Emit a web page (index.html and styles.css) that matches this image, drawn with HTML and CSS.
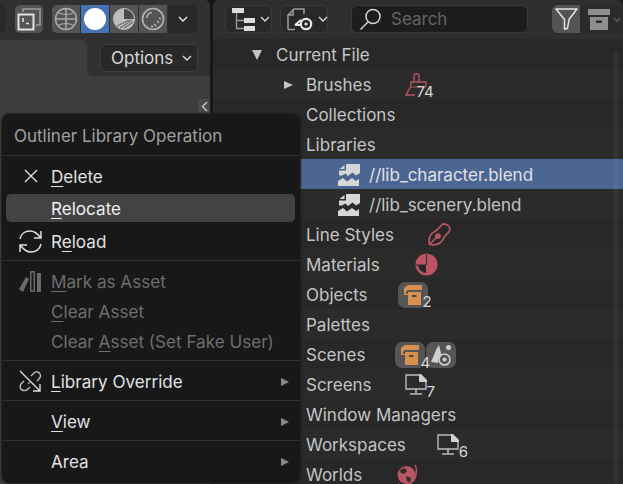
FILE: index.html
```html
<!DOCTYPE html>
<html lang="en">
<head>
  <meta charset="UTF-8">
  <title>Outliner Library Operation</title>
  <link rel="stylesheet" href="styles.css">
</head>
<body>
  <div class="app">

    <!-- 3D viewport, only its corner is visible -->
    <section class="viewport">
      <header class="view-header">
        <div class="stub"></div>
        <div class="xray">
          <svg width="24" height="23" viewBox="0 0 24 23" fill="none">
            <path d="M6 4V1H23V17H19" stroke="#9c9c9c" stroke-width="1.6"/>
            <path d="M1.5 6.5H16.5V21.5H1.5Z" stroke="#e2e2e2" stroke-width="2"/>
            <path d="M6 10V14M9 15.5H12" stroke="#e2e2e2" stroke-width="1.6"/>
          </svg>
        </div>
        <div class="shading">
          <div class="shade">
            <svg width="24" height="24" viewBox="0 0 24 24" fill="none" stroke="#ababab" stroke-width="1.5">
              <circle cx="12" cy="12" r="10.5"/>
              <path d="M1.5 12H22.5M12 1.5V22.5"/>
              <path d="M4 5.500C9 8 15 8 20 5.500M4 18.500C9 16 15 16 20 18.500" stroke-width="1.2"/>
            </svg>
          </div>
          <div class="shade on">
            <svg width="24" height="24" viewBox="0 0 24 24"><circle cx="12" cy="12" r="11" fill="#fff"/></svg>
          </div>
          <div class="shade">
            <svg width="24" height="24" viewBox="0 0 24 24">
              <circle cx="12" cy="12" r="10.500" fill="#bdbdbd" stroke="#bdbdbd" stroke-width="1"/>
              <path d="M12 2A10 10 0 0 1 22 12H12Z" fill="#4a4a4a"/>
              <path d="M8 21L20 13M12 21.500L21 15M5 19L17 13" stroke="#6a6a6a" stroke-width="1.2"/>
            </svg>
          </div>
          <div class="shade">
            <svg width="24" height="24" viewBox="0 0 24 24" fill="none">
              <circle cx="12" cy="12" r="10.500" stroke="#b4b4b4" stroke-width="1.6"/>
              <path d="M6 11C6 7.500 8.500 5.500 11 5.500" stroke="#b4b4b4" stroke-width="1.6"/>
              <path d="M10 19L12 20M13 17L15 19M16 14L18 16M18 11L20 12" stroke="#b4b4b4" stroke-width="1.6"/>
            </svg>
          </div>
          <div class="shade-drop">
            <svg class="chev" width="10" height="6" viewBox="0 0 10 6"><path d="M1 1L5 5L9 1" fill="none" stroke="#e6e6e6" stroke-width="1.4"/></svg>
          </div>
        </div>
      </header>
      <div class="tool-row">
        <div class="tool-gap"></div>
        <div class="tool-options">
          <button class="options">Options
            <svg class="chev" width="10" height="6" viewBox="0 0 10 6"><path d="M1 1L5 5L9 1" fill="none" stroke="#d8d8d8" stroke-width="1.4"/></svg>
          </button>
        </div>
      </div>
      <div class="sidebar-tab">
        <svg width="7" height="11" viewBox="0 0 7 11"><path d="M6 1L1.500 5.500L6 10" fill="none" stroke="#c8c8c8" stroke-width="1.4"/></svg>
      </div>
    </section>

    <!-- Outliner -->
    <section class="outliner">
      <header class="out-header">
        <button class="mode">
          <svg width="25" height="23" viewBox="0 0 25 23" fill="none">
            <path d="M0 0H12V5H0ZM12 10H23V15H12ZM12 18H23V23H12Z" fill="#dcdcdc"/>
            <path d="M4.500 5V20.500H12M4.500 12.500H12" stroke="#9a9a9a" stroke-width="1.3"/>
          </svg>
          <svg class="chev" width="10" height="6" viewBox="0 0 10 6"><path d="M1 1L5 5L9 1" fill="none" stroke="#d8d8d8" stroke-width="1.4"/></svg>
        </button>
        <button class="mode mode-wide">
          <svg width="28" height="23" viewBox="0 0 28 23" fill="none">
            <path d="M1 21.500V7L7 1H17V6M1 21.500H8" stroke="#9c9c9c" stroke-width="1.5"/>
            <path d="M6 2V7H1" stroke="#9c9c9c" stroke-width="1.500"/>
            <path d="M8 17L14 12M8 17H14" stroke="#e6e6e6" stroke-width="2"/>
            <circle cx="19" cy="16" r="5.200" stroke="#e6e6e6" stroke-width="2.2"/>
            <circle cx="19" cy="16" r="1.600" fill="#e6e6e6"/>
          </svg>
          <svg class="chev" width="10" height="6" viewBox="0 0 10 6"><path d="M1 1L5 5L9 1" fill="none" stroke="#d8d8d8" stroke-width="1.4"/></svg>
        </button>
        <div class="search">
          <svg width="23" height="23" viewBox="0 0 23 23" fill="none" stroke="#d4d4d4" stroke-width="1.5">
            <circle cx="14" cy="8.500" r="7"/>
            <path d="M9 14L1.500 21.500"/>
          </svg>
          <span>Search</span>
        </div>
        <div class="filters">
          <div class="filter">
            <svg width="23" height="22" viewBox="0 0 23 22" fill="none">
              <path d="M1 1H22L14 11.500L12.500 20.500L9.500 21V11.500Z" stroke="#e6e6e6" stroke-width="1.5" stroke-linejoin="round"/>
            </svg>
          </div>
          <div class="archive">
            <svg width="22" height="21" viewBox="0 0 22 21">
              <path d="M0 0H22V6H0ZM2 8H20V21H2Z" fill="#8e8e8e"/>
              <path d="M8 11.500H14V14H8Z" fill="#2a2a2a"/>
            </svg>
            <svg width="8" height="5" viewBox="0 0 10 6"><path d="M1 1L5 5L9 1" fill="none" stroke="#6a6a6a" stroke-width="1.4"/></svg>
          </div>
        </div>
      </header>

      <div class="tree">
        <div class="row depth0"><i class="tri-down"></i>Current File</div>
        <div class="row depth1"><i class="tri-right"></i>Brushes
          <span class="tag tag-brushes">
            <svg width="23" height="23" viewBox="0 0 23 23" fill="none" stroke="#b95462" stroke-width="1.4">
              <path d="M9 9V3C9 0 14 0 14 3V9H21V14M21 9H6L5.500 14L2 20L1 22H10"/>
              <path d="M5.500 14H21" stroke-width="1"/>
            </svg>
            <b class="count count-brushes">74</b>
          </span>
        </div>
        <div class="row">Collections</div>
        <div class="row">Libraries</div>
        <div class="row lib sel">
          <svg width="23" height="22" viewBox="0 0 23 22"><path d="M9 0H23V9L19 11.500L15.500 8.500L11 12L8.500 9.500L5 11.500H2V6.500H9ZM2.500 5L7.500 1V5Z" fill="#d6d6d6"/><path d="M1 17L6 14L10 17.500L15 14L19 17L22 15V22H1Z" fill="#d6d6d6"/></svg>
          //lib_character.blend
        </div>
        <div class="row lib">
          <svg width="23" height="22" viewBox="0 0 23 22"><path d="M9 0H23V9L19 11.500L15.500 8.500L11 12L8.500 9.500L5 11.500H2V6.500H9ZM2.500 5L7.500 1V5Z" fill="#d6d6d6"/><path d="M1 17L6 14L10 17.500L15 14L19 17L22 15V22H1Z" fill="#d6d6d6"/></svg>
          //lib_scenery.blend
        </div>
        <div class="row">Line Styles
          <span class="tag tag-lines">
            <svg width="23" height="23" viewBox="0 0 23 23" fill="none" stroke="#b95462" stroke-width="1.7">
              <path d="M1.500 21.500C0.500 16 2 11 6 9C10 7 11 5 13 2.500C15 0.500 18 1 20 2.500C22 4.500 22.500 7 20.500 9.500C17 12 16 14 14.500 17C12 21 7 22.500 1.500 21.500Z"/>
              <path d="M1.500 21.500L8.500 14.500"/>
              <circle cx="10" cy="13" r="2" fill="#b95462"/>
            </svg>
          </span>
        </div>
        <div class="row">Materials
          <span class="tag tag-materials">
            <svg width="23" height="23" viewBox="0 0 23 23">
              <circle cx="11.500" cy="11.500" r="11" fill="#bb5464"/>
              <path d="M11 12H3A8.500 8.500 0 0 0 11 20Z" fill="#262626"/>
              <path d="M11.500 1V12M1 12H11.500" fill="none" stroke="#2c2c2c" stroke-width="1"/>
            </svg>
          </span>
        </div>
        <div class="row">Objects
          <span class="tag tag-objects">
            <span class="chip">
              <svg width="18" height="20" viewBox="0 0 18 20">
                <path d="M4 0H18V5H4ZM0 3L4 0V5L2 6.500V9H4V7H17V20H4V10H0Z" fill="#d8904f"/>
                <path d="M8 10H12.500V12H8Z" fill="#4a4a4a"/>
              </svg>
            </span>
            <b class="count count-objects">2</b>
          </span>
        </div>
        <div class="row">Palettes</div>
        <div class="row">Scenes
          <span class="tag tag-scenes">
            <span class="chip">
              <svg width="18" height="20" viewBox="0 0 18 20">
                <path d="M4 0H18V5H4ZM0 3L4 0V5L2 6.500V9H4V7H17V20H4V10H0Z" fill="#d8904f"/>
                <path d="M8 10H12.500V12H8Z" fill="#4a4a4a"/>
              </svg>
            </span>
            <b class="count count-four">4</b>
            <span class="chip">
              <svg width="22" height="22" viewBox="0 0 22 22">
                <path d="M1 18L6 6L9 1L11 9V12C9 13 8 16 8 19Z" fill="#cfcfcf"/>
                <circle cx="18.500" cy="3.500" r="2.500" fill="#cfcfcf"/>
                <circle cx="14.500" cy="15.500" r="5.500" fill="none" stroke="#cfcfcf" stroke-width="1.6"/>
                <circle cx="14.500" cy="15.500" r="2" fill="#cfcfcf"/>
              </svg>
            </span>
          </span>
        </div>
        <div class="row">Screens
          <span class="tag tag-screens">
            <svg width="23" height="21" viewBox="0 0 23 21" fill="none">
              <path d="M16 1H1V15H21V6" stroke="#bdbdbd" stroke-width="1.4"/>
              <path d="M14 0H16L22 6V8H14Z" fill="#d0d0d0"/>
              <path d="M11 15V19M5 20H17" stroke="#bdbdbd" stroke-width="1.6"/>
            </svg>
            <b class="count count-screens">7</b>
          </span>
        </div>
        <div class="row">Window Managers</div>
        <div class="row">Workspaces
          <span class="tag tag-workspaces">
            <svg width="23" height="21" viewBox="0 0 23 21" fill="none">
              <path d="M16 1H1V15H21V6" stroke="#bdbdbd" stroke-width="1.4"/>
              <path d="M14 0H16L22 6V8H14Z" fill="#d0d0d0"/>
              <path d="M11 15V19M5 20H17" stroke="#bdbdbd" stroke-width="1.6"/>
            </svg>
            <b class="count count-screens">6</b>
          </span>
        </div>
        <div class="row">Worlds
          <span class="tag tag-worlds">
            <svg width="23" height="23" viewBox="0 0 23 23" fill="none">
              <circle cx="10.500" cy="12" r="9" fill="#b95462"/>
              <path d="M4 7L9 5L11 8L8 11L5 10ZM10 13L15 15L14 20L11 18Z" fill="#2c2c2c"/>
              <path d="M2 21C6 23 14 22 18 17C21 13 21 5 19 2" stroke="#b95462" stroke-width="1.4"/>
            </svg>
          </span>
        </div>
      </div>
      <div class="scrollbar"></div>
    </section>

    <!-- context menu over both editors -->
    <nav class="menu">
      <div class="menu-title">Outliner Library Operation</div>
      <div class="sep"></div>
      <div class="item tall">
        <span class="ico">
          <svg width="14" height="14" viewBox="0 0 14 14"><path d="M1 1L13 13M13 1L1 13" stroke="#e0e0e0" stroke-width="1.4"/></svg>
        </span>
        <span><u>D</u>elete</span>
      </div>
      <div class="item tall hot">
        <span class="ico"></span>
        <span><u>R</u>elocate</span>
      </div>
      <div class="item">
        <span class="ico">
          <svg width="23" height="23" viewBox="0 0 23 23" fill="none" stroke="#e0e0e0" stroke-width="1.5">
            <path d="M1 9C2 4 6 1 11 1C15 1 18 3 21 7M22 1V8H15"/>
            <path d="M22 14C21 19 17 22 12 22C8 22 5 20 2 16M1 22V15H8"/>
          </svg>
        </span>
        <span>R<u>e</u>load</span>
      </div>
      <div class="sep"></div>
      <div class="item off">
        <span class="ico">
          <svg width="23" height="23" viewBox="0 0 23 23" fill="#6a6a6a">
            <path d="M0 19L7 7L10 9L4 22ZM11 1H16V22H11ZM12.500 2.500V20.500H14.500V2.500ZM18 3H22V22H18Z" fill-rule="evenodd"/>
          </svg>
        </span>
        <span><u>M</u>ark as Asset</span>
      </div>
      <div class="item off">
        <span class="ico"></span>
        <span><u>C</u>lear Asset</span>
      </div>
      <div class="item off">
        <span class="ico"></span>
        <span>Clear <u>A</u>sset (Set Fake User)</span>
      </div>
      <div class="sep"></div>
      <div class="item">
        <span class="ico">
          <svg width="23" height="23" viewBox="0 0 23 23" fill="none" stroke="#bcbcbc" stroke-width="1.4">
            <path d="M1 1L21 21M21 14V21H14" stroke="#dcdcdc"/>
            <path d="M12 6L15 3C17 1 20 2 21 4C22 6 21 8 20 9L18 11"/>
            <path d="M5 11L2 14C0.500 16 1 19 3 20C5 21 7 21 9 19L11 17"/>
            <path d="M9 14L11 12" stroke="#999"/>
          </svg>
        </span>
        <span><u>L</u>ibrary Override</span>
        <i class="sub"></i>
      </div>
      <div class="sep"></div>
      <div class="item">
        <span class="ico"></span>
        <span><u>V</u>iew</span>
        <i class="sub"></i>
      </div>
      <div class="sep"></div>
      <div class="item">
        <span class="ico"></span>
        <span>Area</span>
        <i class="sub"></i>
      </div>
    </nav>
  </div>
</body>
</html>
```

FILE: styles.css
```css
html, body {
  margin: 0;
  height: 100%;
  overflow: hidden;
  background: #181818;
}
body {
  font-family: Inter, "Noto Sans", sans-serif;
  font-size: 17px;
  color: #c4c4c4;
}
button {
  font: inherit;
  color: inherit;
}
svg {
  display: block;
  flex: none;
}
.app {
  position: relative;
  display: flex;
  gap: 3px;
  width: 623px;
  height: 484px;
  overflow: hidden;
}

/* viewport */
.viewport {
  position: relative;
  width: 210px;
  height: 484px;
  flex: none;
  background: #3d3d3d;
  border-top-right-radius: 6px;
  overflow: hidden;
}
.view-header {
  display: flex;
  align-items: center;
  height: 40px;
  background: #303030;
  padding-bottom: 2px;
  box-sizing: border-box;
}
.stub {
  width: 6px;
  height: 28px;
  background: #282828;
  border-radius: 0 5px 5px 0;
}
.xray {
  display: flex;
  align-items: center;
  justify-content: center;
  width: 28px;
  height: 28px;
  margin-left: 9px;
  background: #545454;
  border-radius: 5px;
}
.shading {
  display: flex;
  height: 28px;
  margin-left: 9px;
  border-radius: 5px;
  overflow: hidden;
}
.shade {
  display: flex;
  align-items: center;
  justify-content: center;
  width: 28px;
  margin-right: 1px;
  background: #545454;
}
.shade.on {
  background: #4772b3;
}
.shade-drop {
  display: flex;
  align-items: center;
  justify-content: center;
  width: 29px;
  background: #282828;
}
.tool-row {
  display: flex;
  height: 36px;
  background: linear-gradient(#303030 50%, #3d3d3d 50%);
}
.tool-gap {
  flex: 1;
  background: #3d3d3d;
  border-top-right-radius: 6px;
}
.tool-options {
  display: flex;
  align-items: flex-start;
  width: 123px;
  padding: 4px 12px 0 13px;
  box-sizing: border-box;
  background: #303030;
  border-bottom-left-radius: 6px;
}
.options {
  display: flex;
  align-items: center;
  justify-content: space-between;
  width: 98px;
  height: 28px;
  padding: 0 5px 0 10px;
  background: #282828;
  border: 1px solid #3d3d3d;
  border-radius: 5px;
  color: #d8d8d8;
}
.sidebar-tab {
  position: absolute;
  top: 99px;
  right: 0;
  display: flex;
  align-items: center;
  justify-content: center;
  width: 12px;
  height: 15px;
  background: #4a4a4a;
  border-top-left-radius: 4px;
}

/* outliner */
.outliner {
  position: relative;
  flex: 1;
  background: #282828;
  border-radius: 6px 6px 0 0;
  overflow: hidden;
}
.out-header {
  display: flex;
  align-items: center;
  height: 39px;
  padding: 0 0 1px 12px;
  box-sizing: border-box;
  background: #2e2e2e;
}
.mode {
  display: flex;
  align-items: center;
  gap: 3px;
  width: 47px;
  height: 28px;
  margin-right: 8px;
  padding: 0 2px 0 6px;
  background: #282828;
  border: 1px solid #3a3a3a;
  border-radius: 6px;
  box-sizing: border-box;
}
.mode-wide {
  width: 48px;
}
.search {
  display: flex;
  align-items: center;
  gap: 9px;
  width: 177px;
  height: 28px;
  margin-left: 15px;
  padding-left: 7px;
  box-sizing: border-box;
  background: #1d1d1d;
  border: 1px solid #3a3a3a;
  border-radius: 6px;
  color: #646464;
}
.filters {
  display: flex;
  align-items: stretch;
  height: 28px;
  margin-left: 24px;
  flex: 1;
  border-radius: 6px 0 0 6px;
  overflow: hidden;
}
.filter {
  display: flex;
  align-items: center;
  justify-content: center;
  width: 28px;
  background: #545454;
}
.archive {
  display: flex;
  align-items: center;
  gap: 3px;
  flex: 1;
  padding-left: 8px;
  background: #2b2b2b;
}
.row {
  display: flex;
  align-items: center;
  height: 30px;
  padding-left: 93px;
  padding-top: 1px;
  box-sizing: border-box;
  white-space: nowrap;
  color: #c4c4c4;
}
.row:nth-child(even) {
  background: #2b2b2b;
}
.depth0 {
  padding-left: 39px;
}
.depth1 {
  padding-left: 71px;
}
.lib {
  padding-left: 124px;
  gap: 9px;
}
.row.sel {
  background: #4c6694;
  color: #e0e0e0;
}
.tri-down {
  width: 0;
  height: 0;
  margin-right: 14px;
  border-left: 5.5px solid transparent;
  border-right: 5.5px solid transparent;
  border-top: 10px solid #c4c4c4;
}
.tri-right {
  width: 0;
  height: 0;
  margin-right: 13px;
  border-top: 4.5px solid transparent;
  border-bottom: 4.5px solid transparent;
  border-left: 9px solid #c4c4c4;
}
.tag {
  position: relative;
  display: flex;
  align-items: center;
}
.tag-brushes { margin-left: 33px; }
.tag-lines { margin-left: 34px; }
.tag-materials { margin-left: 35px; }
.tag-objects { margin-left: 30px; }
.tag-scenes { margin-left: 30px; gap: 1px; }
.tag-screens { margin-left: 33px; }
.tag-workspaces { margin-left: 31px; }
.tag-worlds { margin-left: 34px; }
.count {
  position: absolute;
  font-size: 15px;
  line-height: 18px;
  font-weight: 400;
  color: #d8d8d8;
}
.count-brushes {
  left: 12px;
  top: 10px;
}
.count-objects {
  left: 25px;
  top: 11px;
}
.count-four {
  left: 25px;
  top: 12px;
}
.count-screens {
  left: 22px;
  top: 9px;
}
.chip {
  display: flex;
  align-items: center;
  justify-content: center;
  width: 30px;
  height: 26px;
  background: #555555;
  border-radius: 7px;
}
.scrollbar {
  position: absolute;
  top: 52px;
  right: 5px;
  bottom: 0;
  width: 4px;
  border-radius: 2px;
  background: rgba(255, 255, 255, 0.05);
}

/* popup menu */
.menu {
  position: absolute;
  left: 2px;
  top: 114px;
  width: 298px;
  height: 369px;
  padding: 0 5px 6px 4px;
  box-sizing: border-box;
  background: #181818;
  border-radius: 8px;
  box-shadow: 0 0 2px 1px #1f1f1f;
  color: #e2e2e2;
}
.menu-title {
  display: flex;
  align-items: center;
  height: 41px;
  padding-left: 8px;
  padding-top: 3px;
  box-sizing: border-box;
  color: #a0a0a0;
}
.sep {
  height: 1px;
  margin: 0 -5px 5px -4px;
  background: #303030;
}
.item {
  display: flex;
  align-items: center;
  height: 30px;
  padding-top: 1px;
  box-sizing: border-box;
  font-size: 17.1px;
}
.item.tall {
  margin-bottom: 3px;
  padding-top: 0;
}
.item + .sep {
  margin-top: 4px;
}
.item.hot {
  height: 28px;
  margin-top: 1px;
  margin-bottom: 4px;
  padding-top: 1px;
  background: #434343;
  border-radius: 5px;
  color: #f0f0f0;
}
.item.off {
  color: #6e6e6e;
}
.ico {
  display: flex;
  align-items: center;
  justify-content: center;
  width: 23px;
  margin: 0 9px 0 13px;
}
.sub {
  width: 0;
  height: 0;
  margin-left: auto;
  margin-right: 6px;
  border-top: 4.5px solid transparent;
  border-bottom: 4.5px solid transparent;
  border-left: 8px solid #8a8a8a;
}
u {
  text-underline-offset: 3px;
  text-decoration-thickness: 1px;
}
```
